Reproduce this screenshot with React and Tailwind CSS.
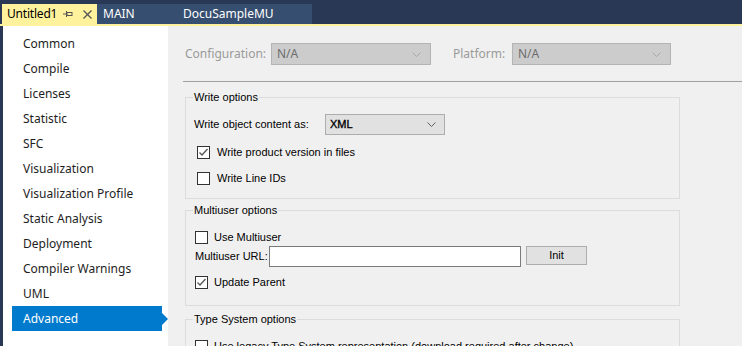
import React from "react";

const navItems = [
  "Common",
  "Compile",
  "Licenses",
  "Statistic",
  "SFC",
  "Visualization",
  "Visualization Profile",
  "Static Analysis",
  "Deployment",
  "Compiler Warnings",
  "UML",
  "Advanced",
];

const segoe = { fontFamily: '"Segoe UI", "Noto Sans", sans-serif' };
const msSans = { fontFamily: '"Liberation Sans", Arial, sans-serif' };

const Chevron = ({ color }) => (
  <svg width="9" height="5" viewBox="0 0 9 5" className="shrink-0">
    <polyline points="0.5,0.5 4.5,4.5 8.5,0.5" fill="none" stroke={color} strokeWidth="1" />
  </svg>
);

const DisabledSelect = ({ width }) => (
  <div className={`${width} h-[22px] flex items-center justify-between pl-[5px] pr-[9px] bg-[#cccccc] border border-[#b4b4b4] text-[12px] text-[#6d6d6d]`}>
    <span>N/A</span>
    <Chevron color="#a8a8a8" />
  </div>
);

const CheckBox = ({ checked }) => (
  <div className="w-[13px] h-[13px] shrink-0 bg-white border border-[#333333] flex items-center justify-center">
    {checked && (
      <svg width="11" height="11" viewBox="0 0 11 11">
        <polyline points="1.5,5.5 4,8 9.5,2" fill="none" stroke="#555555" strokeWidth="1.3" />
      </svg>
    )}
  </div>
);

const Group = ({ title, className, children }) => (
  <div className={`w-[495px] border border-[#dcdcdc] ${className}`}>
    <div className="w-fit -mt-[8px] ml-[7px] px-[1px] bg-[#f0f0f0] text-[11px] leading-[14px]" style={msSans}>
      {title}
    </div>
    {children}
  </div>
);

const CheckRow = ({ checked, label, className, gap = "ml-[6px]" }) => (
  <div className={`flex items-center ${className}`}>
    <CheckBox checked={checked} />
    <span className={`${gap} text-[11px] leading-[13px] whitespace-nowrap`}>{label}</span>
  </div>
);

export default function App() {
  return (
    <div className="w-[742px] h-[346px] overflow-hidden bg-[#293955] flex flex-col" style={segoe}>
      {/* document tabs */}
      <div className="flex items-end pt-[4px] pl-[2px] h-[24px] shrink-0">
        <div className="h-[20px] w-[95px] bg-[#fff29d] flex items-center pl-[5px] text-[12px] text-black">
          <span className="w-[56px] tracking-[-0.2px] whitespace-nowrap">Untitled1</span>
          <svg width="10" height="8" viewBox="0 0 10 8" className="shrink-0">
            <line x1="0" y1="4" x2="3" y2="4" stroke="#555" strokeWidth="1" />
            <line x1="3.5" y1="1" x2="3.5" y2="7" stroke="#555" strokeWidth="1" />
            <rect x="4" y="2.5" width="5" height="3" fill="none" stroke="#555" strokeWidth="1" />
          </svg>
          <svg width="9" height="9" viewBox="0 0 9 9" className="ml-[10px] shrink-0">
            <line x1="0.5" y1="0.5" x2="8.5" y2="8.5" stroke="#555" strokeWidth="1.2" />
            <line x1="8.5" y1="0.5" x2="0.5" y2="8.5" stroke="#555" strokeWidth="1.2" />
          </svg>
        </div>
        <div className="h-[20px] w-[215px] bg-[#364e6f] flex items-center text-[12px] text-white">
          <span className="ml-[6px] w-[80px]">MAIN</span>
          <span>DocuSampleMU</span>
        </div>
      </div>
      <div className="h-[2px] bg-[#fff29d] shrink-0" />

      <div className="flex flex-1 pl-[3px]">
        {/* left nav */}
        <div className="w-[165px] bg-white pt-[5px] shrink-0">
          {navItems.map((item) => (
            <div
              key={item}
              className={`relative ml-[9px] w-[150px] h-[25px] flex items-center pl-[11px] text-[12px] ${
                item === "Advanced" ? "bg-[#007acc] text-white" : "text-[#1e1e1e]"
              }`}
            >
              {item}
              {item === "Advanced" && (
                <div className="absolute left-[150px] top-[7px] w-0 h-0 border-y-[6px] border-y-transparent border-l-[6px] border-l-[#007acc]" />
              )}
            </div>
          ))}
        </div>

        {/* content */}
        <div className="flex-1 bg-[#f0f0f0] pl-[15px] pt-[17px]">
          <div className="flex items-center pl-[2px] h-[22px]">
            <span className="w-[86px] text-[12px] text-[#9a9a9a]">Configuration:</span>
            <DisabledSelect width="w-[160px]" />
            <span className="ml-[22px] w-[59px] text-[12px] text-[#9a9a9a]">Platform:</span>
            <DisabledSelect width="w-[159px]" />
          </div>
          <div className="mt-[16px] h-px bg-[#a0a0a0]" />

          <div className="pl-[2px] text-black" style={msSans}>
            <Group title="Write options" className="mt-[15px] h-[102px]">
              <div className="flex items-center mt-[10px] pl-[8px]">
                <span className="w-[131px] text-[11px]">Write object content as:</span>
                <div className="w-[120px] h-[21px] flex items-center justify-between pl-[4px] pr-[8px] bg-[#e1e1e1] border border-[#adadad] text-[11px] [-webkit-text-stroke:0.35px_#000]">
                  <span>XML</span>
                  <Chevron color="#606060" />
                </div>
              </div>
              <CheckRow checked label="Write product version in files" className="mt-[11px] pl-[11px]" gap="ml-[7px]" />
              <CheckRow label="Write Line IDs" className="mt-[13px] pl-[11px]" gap="ml-[7px]" />
            </Group>

            <Group title="Multiuser options" className="mt-[11px] h-[96px]">
              <CheckRow label="Use Multiuser" className="mt-[14px] pl-[9px]" />
              <div className="flex items-start mt-[2px] pl-[9px]">
                <span className="w-[74px] h-[21px] flex items-center text-[11px]">Multiuser URL:</span>
                <div className="w-[252px] h-[21px] bg-white border border-[#7a7a7a]" />
                <div className="ml-[5px] w-[61px] h-[19px] bg-[#e1e1e1] border border-[#adadad] flex items-center justify-center text-[11px]">
                  Init
                </div>
              </div>
              <CheckRow checked label="Update Parent" className="mt-[9px] pl-[9px]" />
            </Group>

            <Group title="Type System options" className="mt-[13px] h-[60px]">
              <CheckRow
                label="Use legacy Type System representation (download required after change)"
                className="mt-[14px] pl-[9px]"
              />
            </Group>
          </div>
        </div>
      </div>
    </div>
  );
}
